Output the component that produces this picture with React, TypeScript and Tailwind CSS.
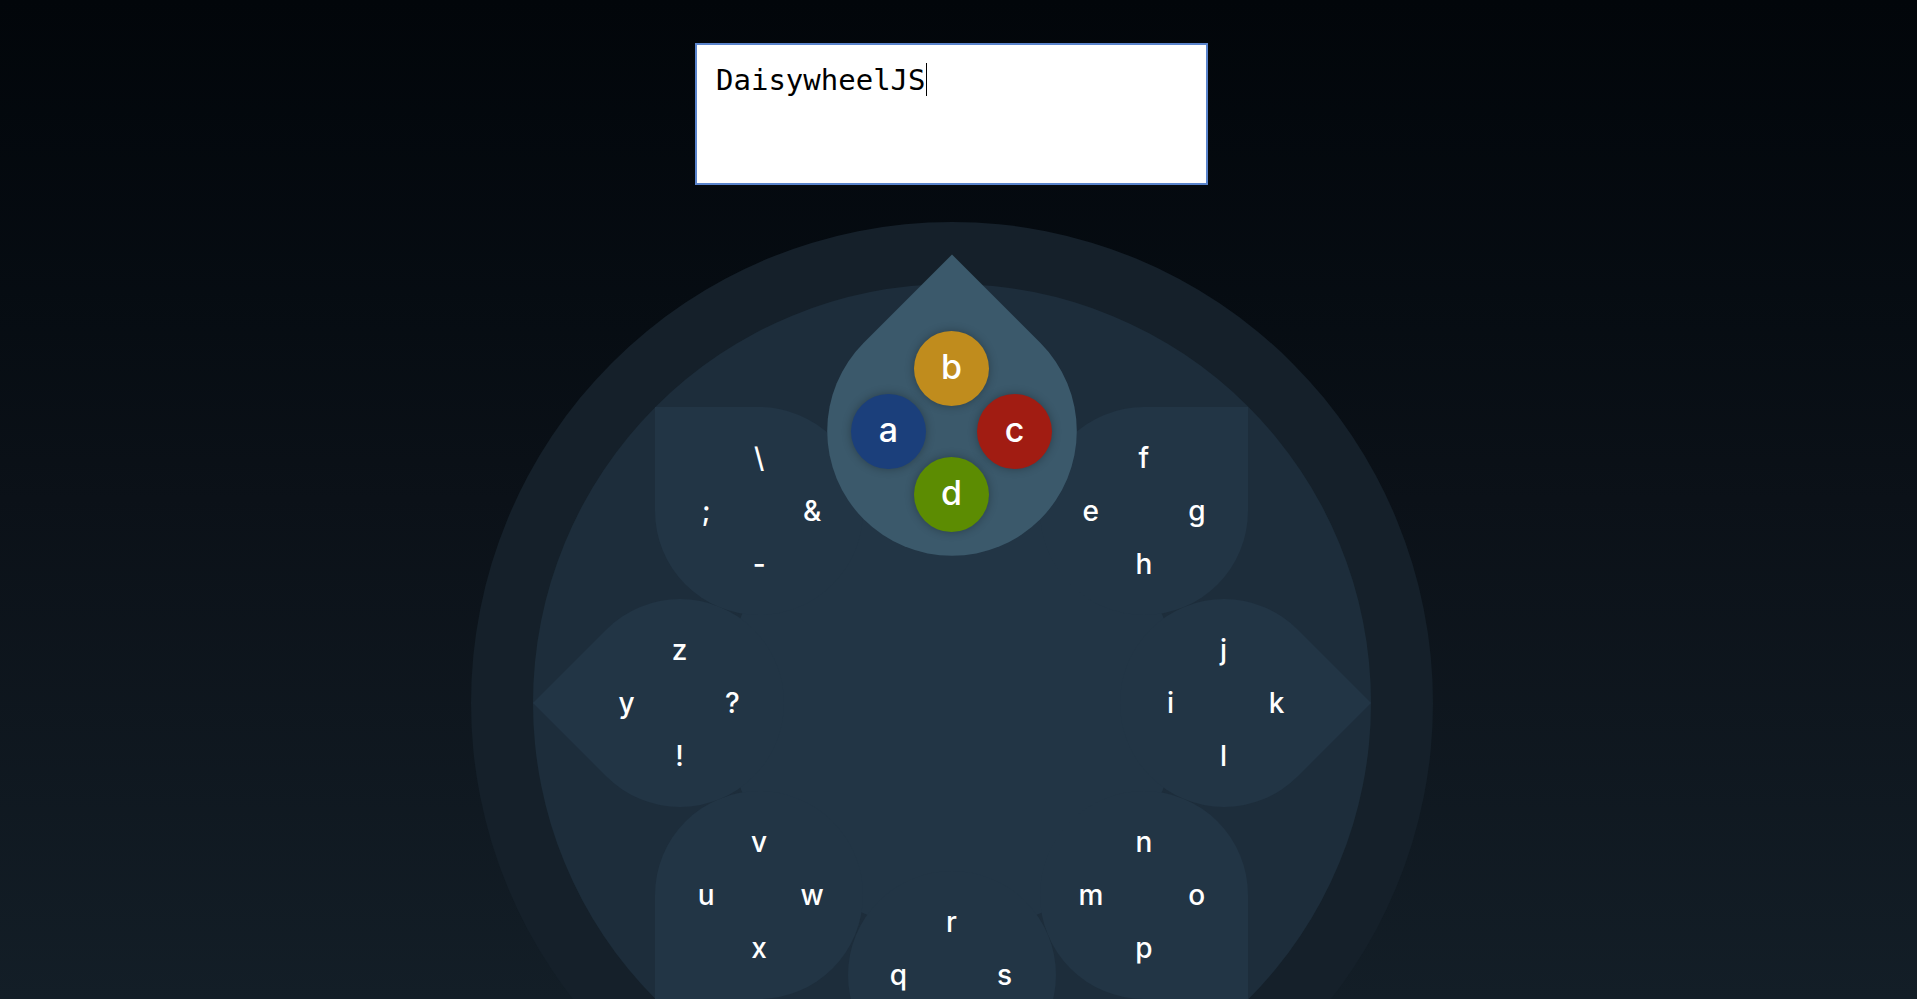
type Petal = {
  angle: number;
  keys: [string, string, string, string]; // left, top, right, bottom
  active?: boolean;
};

const PETALS: Petal[] = [
  { angle: -45, keys: ["e", "f", "g", "h"] },
  { angle: 0, keys: ["i", "j", "k", "l"] },
  { angle: 45, keys: ["m", "n", "o", "p"] },
  { angle: 90, keys: ["q", "r", "s", "t"] },
  { angle: 135, keys: ["u", "v", "w", "x"] },
  { angle: 180, keys: ["y", "z", "?", "!"] },
  { angle: 225, keys: [";", "\\", "&", "-"] },
  { angle: -90, keys: ["a", "b", "c", "d"], active: true },
];

const BUTTON_COLORS = ["bg-[#1b3f7b]", "bg-[#c08c1d]", "bg-[#a11c12]", "bg-[#5c8c02]"];

const WHEEL = 962;
const C = WHEEL / 2;
const DIST = 272; // wheel center -> petal center
const SIZE = 208;
const GAP = 53;

function offsets(gap: number) {
  return [
    [-gap, 0],
    [0, -gap],
    [gap, 0],
    [0, gap],
  ];
}

function center(p: Petal) {
  const rad = (p.angle * Math.PI) / 180;
  return [C + DIST * Math.cos(rad), C + DIST * Math.sin(rad)];
}

function PetalShape({ p }: { p: Petal }) {
  const [cx, cy] = center(p);
  const scale = p.active ? 1.2 : 1;
  return (
    <div
      className={`absolute rounded-[50%] rounded-tl-none ${
        p.active ? "z-20 bg-[#3b596b]" : "z-0 bg-[#223545]"
      }`}
      style={{
        left: cx - SIZE / 2,
        top: cy - SIZE / 2,
        width: SIZE,
        height: SIZE,
        transform: `rotate(${p.angle - 225}deg) scale(${scale})`,
      }}
    />
  );
}

function PetalKeys({ p }: { p: Petal }) {
  const [cx, cy] = center(p);
  const gap = p.active ? 63 : GAP;
  return (
    <>
      {offsets(gap).map(([dx, dy], i) => {
        if (p.active) {
          return (
            <div
              key={i}
              className={`absolute z-30 flex items-center justify-center rounded-full w-[75px] h-[75px] text-[34px] leading-none font-medium text-white shadow-[0_0_10px_rgba(0,0,0,0.3)] ${BUTTON_COLORS[i]}`}
              style={{ left: cx + dx - 37.5, top: cy + dy - 37.5 }}
            >
              <span className="-mt-[2px]">{p.keys[i]}</span>
            </div>
          );
        }
        return (
          <div
            key={i}
            className="absolute z-10 flex items-center justify-center w-[40px] h-[40px] text-[28px] leading-none font-medium text-white"
            style={{ left: cx + dx - 20, top: cy + dy - 20 }}
          >
            <span>{p.keys[i]}</span>
          </div>
        );
      })}
    </>
  );
}

function Wheel() {
  return (
    <div className="relative mt-[37px] w-[962px] h-[962px] shrink-0 rounded-full bg-[#15202a] font-['Inter','Lato',sans-serif]">
      <div className="absolute inset-[62px] rounded-full bg-[#1d2d3b]" />
      <div className="absolute left-[253px] top-[253px] w-[456px] h-[456px] rounded-full bg-[#223545]" />
      {PETALS.map((p) => (
        <PetalShape key={p.angle} p={p} />
      ))}
      {PETALS.map((p) => (
        <PetalKeys key={p.angle} p={p} />
      ))}
    </div>
  );
}

export default function App() {
  return (
    <div className="h-[999px] overflow-hidden bg-linear-to-b from-[#02060a] via-[#0b1118] to-[#131e27]">
      <div className="w-[1903px] flex flex-col items-center">
        <div className="mt-[43px] w-[513px] h-[142px] shrink-0 border-2 border-[#5a84cc] bg-white pl-[19px] pr-[17px] pt-[18px] font-['DejaVu_Sans_Mono',monospace] text-[29px] leading-[34px] text-black">
          DaisywheelJS
          <span className="inline-block w-px h-[33px] bg-black align-top" />
        </div>
        <Wheel />
      </div>
    </div>
  );
}
